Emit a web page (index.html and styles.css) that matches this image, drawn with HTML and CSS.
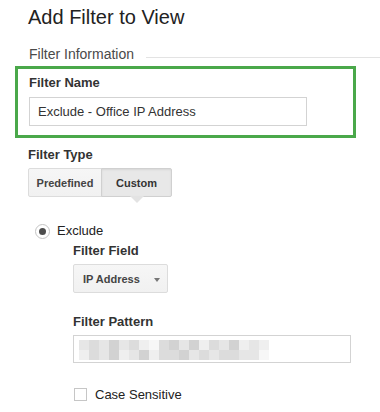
FILE: index.html
```html
<!DOCTYPE html>
<html>

<head>
    <meta name="viewport" content="width=device-width, initial-scale=1">
    <link rel="stylesheet" href="styles.css">
</head>

<body>
    <div id="page">
        <h1 class="title">Add Filter to View</h1>

        <div class="sectionHead">
            <span class="sectionName">Filter Information</span>
            <span class="sectionRule"></span>
        </div>

        <div class="highlight">
            <div class="label">Filter Name</div>
            <div class="textInput nameInput">Exclude - Office IP Address</div>
        </div>

        <div class="group">
            <div class="label typeLabel">Filter Type</div>
            <div class="toggle">
                <button class="toggleBtn predefined">Predefined</button>
                <button class="toggleBtn custom active">Custom</button>
            </div>

            <div class="radioRow">
                <span class="radio"><span class="radioDot"></span></span>
                <span class="radioText">Exclude</span>
            </div>

            <div class="sub">
                <div class="label fieldLabel">Filter Field</div>
                <div class="select">
                    <span>IP Address</span>
                    <span class="caret"></span>
                </div>

                <div class="label patternLabel">Filter Pattern</div>
                <div class="textInput patternInput">
                    <div class="blur">
                        <span class="c2"></span><span class="c3"></span><span class="c2"></span><span class="c4"></span><span class="c2"></span>
                        <span class="c3"></span><span class="c1"></span><span class="c0"></span><span class="c3"></span><span class="c4"></span>
                        <span class="c2"></span><span class="c4"></span><span class="c1"></span><span class="c3"></span><span class="c2"></span>
                        <span class="c4"></span><span class="c1"></span><span class="c2"></span><span class="c1"></span>

                        <span class="c1"></span><span class="c3"></span><span class="c2"></span><span class="c4"></span><span class="c1"></span>
                        <span class="c2"></span><span class="c4"></span><span class="c1"></span><span class="c3"></span><span class="c3"></span>
                        <span class="c4"></span><span class="c2"></span><span class="c3"></span><span class="c2"></span><span class="c3"></span>
                        <span class="c3"></span><span class="c2"></span><span class="c2"></span><span class="c0"></span>
                    </div>
                </div>

                <div class="checkRow">
                    <span class="checkbox"></span>
                    <span class="checkText">Case Sensitive</span>
                </div>
            </div>
        </div>
    </div>
</body>

</html>
```

FILE: styles.css
```css
body {
    margin: 0;
    background-color: white;
    font-family: "Liberation Sans", Arial, sans-serif;
    color: #333;
}

#page {
    width: 380px;
    height: 412px;
    overflow: hidden;
}

.title {
    margin: 5px 0 0 28px;
    font-size: 20px;
    line-height: 24px;
    font-weight: normal;
    color: #222;
}

/* Section heading with rule */
.sectionHead {
    display: flex;
    margin-top: 16px;
    padding-left: 29px;
}

.sectionName {
    font-size: 14px;
    line-height: 18px;
    color: #4a4a4a;
}

.sectionRule {
    flex: 1;
    height: 12px;
    margin-left: 12px;
    border-bottom: 1px solid #e3e3e3;
}

/* Green box round the name */
.highlight {
    margin: 3px 0 0 15px;
    width: 324px;
    height: 60px;
    border: 3px solid #4aa84a;
    padding: 6px 0 0 11px;
}

.label {
    font-size: 13px;
    line-height: 16px;
    font-weight: bold;
    color: #333;
}

.textInput {
    box-sizing: border-box;
    border: 1px solid #d3d3d3;
    background-color: white;
}

.nameInput {
    margin-top: 6px;
    width: 278px;
    height: 29px;
    padding: 0 8px;
    font-size: 13px;
    line-height: 27px;
    color: #333;
}

.group {
    padding-left: 28px;
}

.typeLabel {
    margin-top: 9px;
}

/* Predefined / Custom toggle */
.toggle {
    display: flex;
    margin-top: 5px;
}

.toggleBtn {
    position: relative;
    height: 29px;
    border: 1px solid #dcdcdc;
    background: linear-gradient(#f6f6f6, #f1f1f1);
    font-family: "Liberation Sans", Arial, sans-serif;
    font-size: 11px;
    font-weight: bold;
    color: #444;
    padding: 0;
    margin: 0;
}

.predefined {
    width: 74px;
    border-radius: 2px 0 0 2px;
}

.custom {
    width: 71px;
    margin-left: -1px;
    border-radius: 0 2px 2px 0;
}

.toggleBtn.active {
    background: #e8e8e8;
    border-color: #d0d0d0;
    box-shadow: inset 0 1px 2px rgba(0, 0, 0, 0.08);
    color: #333;
}

/* pointer under the active button */
.toggleBtn.active:after {
    content: "";
    position: absolute;
    left: 50%;
    bottom: -7px;
    margin-left: -7px;
    border-left: 7px solid transparent;
    border-right: 7px solid transparent;
    border-top: 7px solid #e3e3e3;
}

.radioRow {
    display: flex;
    align-items: center;
    margin-top: 26px;
    padding-left: 7px;
    height: 16px;
}

.radio {
    box-sizing: border-box;
    width: 15px;
    height: 15px;
    border: 1px solid #c4c4c4;
    border-radius: 50%;
    display: flex;
    align-items: center;
    justify-content: center;
    background: white;
}

.radioDot {
    width: 7px;
    height: 7px;
    border-radius: 50%;
    background: #4d4d4d;
}

.radioText {
    margin-left: 7px;
    font-size: 13px;
    line-height: 16px;
    color: #222;
}

.sub {
    padding-left: 45px;
}

.fieldLabel {
    margin-top: 4px;
}

.select {
    box-sizing: border-box;
    display: flex;
    align-items: center;
    margin-top: 5px;
    width: 95px;
    height: 29px;
    padding: 0 0 0 9px;
    border: 1px solid #dcdcdc;
    border-radius: 2px;
    background: linear-gradient(#f6f6f6, #f1f1f1);
    font-size: 11px;
    font-weight: bold;
    color: #444;
}

.caret {
    margin-left: 14px;
    margin-top: 2px;
    border-left: 3px solid transparent;
    border-right: 3px solid transparent;
    border-top: 4px solid #777;
}

.patternLabel {
    margin-top: 21px;
}

.patternInput {
    margin-top: 5px;
    width: 278px;
    height: 28px;
    padding: 4px 0 0 5px;
}

/* pixelated (hidden) value */
.blur {
    display: grid;
    grid-template-columns: repeat(19, 10px);
    grid-auto-rows: 10px;
}

.blur .c0 { background: #f7f7f7; }
.blur .c1 { background: #efefef; }
.blur .c2 { background: #e6e6e6; }
.blur .c3 { background: #dcdcdc; }
.blur .c4 { background: #d2d2d2; }

.checkRow {
    display: flex;
    align-items: center;
    margin-top: 23px;
    height: 16px;
}

.checkbox {
    box-sizing: border-box;
    width: 13px;
    height: 13px;
    margin-left: 1px;
    border: 1px solid #c6c6c6;
    background: white;
}

.checkText {
    margin-left: 8px;
    font-size: 13px;
    color: #222;
}
```
